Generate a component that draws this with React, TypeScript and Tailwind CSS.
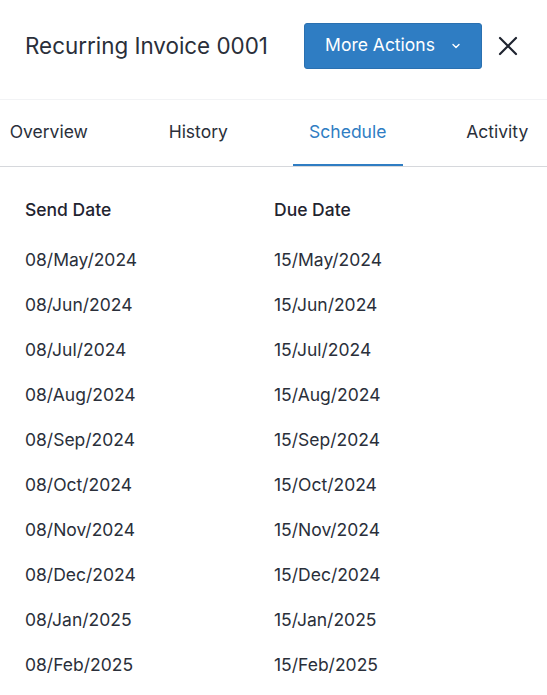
import React from "react";

const rows = [
  ["08/May/2024", "15/May/2024"],
  ["08/Jun/2024", "15/Jun/2024"],
  ["08/Jul/2024", "15/Jul/2024"],
  ["08/Aug/2024", "15/Aug/2024"],
  ["08/Sep/2024", "15/Sep/2024"],
  ["08/Oct/2024", "15/Oct/2024"],
  ["08/Nov/2024", "15/Nov/2024"],
  ["08/Dec/2024", "15/Dec/2024"],
  ["08/Jan/2025", "15/Jan/2025"],
  ["08/Feb/2025", "15/Feb/2025"],
];

const tabs = ["Overview", "History", "Schedule", "Activity"];

export default function App() {
  return (
    <div
      className="w-[547px] h-[695px] overflow-hidden bg-white text-[#2a2f3a]"
      style={{ fontFamily: "Inter, 'Noto Sans', sans-serif" }}
    >
      <div className="h-[100px] flex items-center pb-[8px] pl-[25px] pr-[29px] border-b border-[#f2f3f5]">
        <h1 className="text-[22.4px] font-normal text-[#2a2f3a] flex-1">Recurring Invoice 0001</h1>
        <button className="h-[46px] w-[178px] flex items-center justify-center gap-[16px] bg-[#2f7dc3] border border-[#2a70b0] rounded-[3px] text-white text-[17.5px]">
          <span>More Actions</span>
          <svg width="10" height="10" viewBox="0 0 10 10" fill="none" stroke="white" strokeWidth="1.4" strokeLinecap="round" strokeLinejoin="round">
            <path d="M2 3.5 L5 6.5 L8 3.5" />
          </svg>
        </button>
        <button className="ml-[16px] w-[20px] h-[20px] flex items-center justify-center">
          <svg width="20" height="20" viewBox="0 0 20 20" fill="none" stroke="#1f2430" strokeWidth="2.2" strokeLinecap="round">
            <path d="M2 2 L18 18 M18 2 L2 18" />
          </svg>
        </button>
      </div>

      <div className="flex h-[67px] border-b border-[#d6d8dc] -ml-[26px]">
        {tabs.map((t) => {
          const active = t === "Schedule";
          return (
            <div key={t} className="w-[149.5px] shrink-0 flex justify-center">
              <div
                className={
                  "w-[110px] h-full flex items-center justify-center text-[17.5px] border-b-2 " +
                  (active ? "border-[#2f7dc3] text-[#2f7dc3]" : "border-transparent text-[#2a2f3a]")
                }
              >
                {t}
              </div>
            </div>
          );
        })}
      </div>

      <div className="px-[25px] pt-[30px]">
        <div className="grid grid-cols-[249px_1fr] text-[17.5px] font-medium text-[#1f2430] h-[26px] items-center mb-[24px]">
          <div>Send Date</div>
          <div>Due Date</div>
        </div>
        <div className="-mt-[9.5px]">
          {rows.map(([a, b]) => (
            <div key={a} className="grid grid-cols-[249px_1fr] text-[17.5px] text-[#2a2f3a] h-[45px] items-center">
              <div>{a}</div>
              <div>{b}</div>
            </div>
          ))}
        </div>
      </div>
    </div>
  );
}
